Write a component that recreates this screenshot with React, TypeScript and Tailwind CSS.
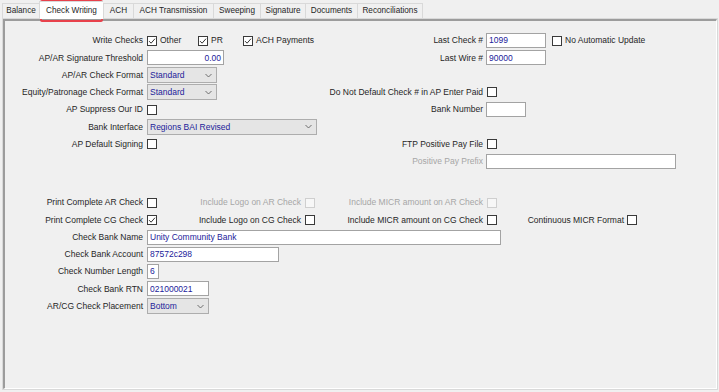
import React from 'react'

const NAVY = 'text-[#22229a]'

const Box = ({ checked, disabled }: { checked?: boolean; disabled?: boolean }) => (
  <span
    className={`w-[10px] h-[10px] shrink-0 border flex items-center justify-center ${
      disabled ? 'border-[#cfcfcf] bg-[#f7f7f7]' : 'border-[#3a3a3a] bg-white'
    }`}
  >
    {checked && (
      <svg width="8" height="8" viewBox="0 0 8 8">
        <path d="M1 4.1 L3.1 6.2 L7 1.7" fill="none" stroke="#333" strokeWidth="1" />
      </svg>
    )}
  </span>
)

const Label = ({ w, children, dim }: { w: string; children?: React.ReactNode; dim?: boolean }) => (
  <div className={`${w} shrink-0 flex justify-end whitespace-nowrap ${dim ? 'text-[#a6a6a6]' : 'text-[#262626]'}`}>
    {children}
  </div>
)

const Field = ({ w, value, right }: { w: string; value?: string; right?: boolean }) => (
  <div
    className={`${w} h-[15px] shrink-0 bg-white border border-[#a3a3a3] flex items-center px-[2px] ${NAVY} ${
      right ? 'justify-end' : ''
    }`}
  >
    {value}
  </div>
)

const Chevron = () => (
  <svg width="7" height="5" viewBox="0 0 7 5">
    <path d="M0.5 1 L3.5 4 L6.5 1" fill="none" stroke="#606060" strokeWidth="0.9" />
  </svg>
)

const Select = ({ w, value }: { w: string; value: string }) => (
  <div
    className={`${w} h-[16px] shrink-0 bg-[#e5e5e5] border border-[#adadad] flex items-center justify-between pl-[2px] pr-[4px] ${NAVY}`}
  >
    <span>{value}</span>
    <Chevron />
  </div>
)

const Check = ({ label, checked }: { label: string; checked?: boolean }) => (
  <div className="flex items-center text-[#262626]">
    <Box checked={checked} />
    <span className="ml-[3px]">{label}</span>
  </div>
)

// one row of the top block: left label, left controls, right label, right controls
const Row = ({
  label,
  left,
  rlabel,
  right,
  rdim,
}: {
  label?: string
  left?: React.ReactNode
  rlabel?: string
  right?: React.ReactNode
  rdim?: boolean
}) => (
  <div className="flex items-center h-[17.25px]">
    <Label w="w-[138px]">{label}</Label>
    <div className="w-[184px] shrink-0 flex items-center pl-[4px]">{left}</div>
    <Label w="w-[156px]" dim={rdim}>
      {rlabel}
    </Label>
    <div className="flex items-center">{right}</div>
  </div>
)

const tabs = [
  { name: 'Balance', w: 'w-[37px]' },
  { name: 'Check Writing', w: 'w-[64px]', active: true },
  { name: 'ACH', w: 'w-[30px]' },
  { name: 'ACH Transmission', w: 'w-[80px]' },
  { name: 'Sweeping', w: 'w-[47px]' },
  { name: 'Signature', w: 'w-[45px]' },
  { name: 'Documents', w: 'w-[52px]' },
  { name: 'Reconciliations', w: 'w-[66px]' },
]

export default function App() {
  return (
    <div className="relative w-[719px] h-[392px] bg-[#f0f0f0] flex flex-col overflow-hidden font-['Liberation_Sans',Arial,sans-serif] text-[8.5px] leading-none text-black">
      {/* Tabs */}
      <div className="flex items-end h-[18px] pl-[2px] text-[8.2px] text-[#262626]">
        {tabs.map((t, i) => (
          <div
            key={t.name}
            className={`${t.w} flex items-center justify-center pt-px border-t border-l border-[#d9d9d9] ${
              i === tabs.length - 1 ? 'border-r' : ''
            } ${t.active ? 'h-[18px] -mb-px bg-white relative z-10' : 'h-[15px] bg-[#f0f0f0]'}`}
          >
            {t.name}
          </div>
        ))}
      </div>

      {/* Tab page */}
      <div className="flex-1 ml-[2px] mr-px mb-[2px] border border-[#d9d9d9] bg-[#f0f0f0]">
        <div className="h-full border-t-2 border-l-2 border-t-[#9c9c9c] border-l-[#9c9c9c] border-r border-b border-r-white border-b-white pt-[11px]">
          <Row
            label="Write Checks"
            left={
              <>
                <div className="w-[51px]">
                  <Check label="Other" checked />
                </div>
                <div className="w-[45px]">
                  <Check label="PR" checked />
                </div>
                <Check label="ACH Payments" checked />
              </>
            }
            rlabel="Last Check #"
            right={
              <>
                <Field w="w-[60px] ml-[3px]" value="1099" />
                <div className="ml-[6px]">
                  <Check label="No Automatic Update" />
                </div>
              </>
            }
          />
          <Row
            label="AP/AR Signature Threshold"
            left={<Field w="w-[77px]" value="0.00" right />}
            rlabel="Last Wire #"
            right={<Field w="w-[60px] ml-[3px]" value="90000" />}
          />
          <Row label="AP/AR Check Format" left={<Select w="w-[70px]" value="Standard" />} />
          <Row
            label="Equity/Patronage Check Format"
            left={<Select w="w-[70px]" value="Standard" />}
            rlabel="Do Not Default Check # in AP Enter Paid"
            right={
              <div className="ml-[4px]">
                <Box />
              </div>
            }
          />
          <Row
            label="AP Suppress Our ID"
            left={<Box />}
            rlabel="Bank Number"
            right={<Field w="w-[40px] ml-[3px]" />}
          />
          <Row label="Bank Interface" left={<Select w="w-[170px]" value="Regions BAI Revised" />} />
          <Row
            label="AP Default Signing"
            left={<Box />}
            rlabel="FTP Positive Pay File"
            right={
              <div className="ml-[4px]">
                <Box />
              </div>
            }
          />
          <Row rlabel="Positive Pay Prefix" rdim right={<Field w="w-[190px] ml-[3px]" />} />

          {/* Bottom block */}
          <div className="mt-[24px]">
            <div className="flex items-center h-[17.25px]">
              <Label w="w-[138px]">Print Complete AR Check</Label>
              <span className="ml-[4px]">
                <Box />
              </span>
              <Label w="w-[144px]" dim>
                Include Logo on AR Check
              </Label>
              <span className="ml-[4px]">
                <Box disabled />
              </span>
              <Label w="w-[168px]" dim>
                Include MICR amount on AR Check
              </Label>
              <span className="ml-[4px]">
                <Box disabled />
              </span>
            </div>
            <div className="flex items-center h-[17.25px]">
              <Label w="w-[138px]">Print Complete CG Check</Label>
              <span className="ml-[4px]">
                <Box checked />
              </span>
              <Label w="w-[144px]">Include Logo on CG Check</Label>
              <span className="ml-[4px]">
                <Box />
              </span>
              <Label w="w-[168px]">Include MICR amount on CG Check</Label>
              <span className="ml-[4px]">
                <Box />
              </span>
              <Label w="w-[127px]">Continuous MICR Format</Label>
              <span className="ml-[3px]">
                <Box />
              </span>
            </div>
            <Row label="Check Bank Name" left={<Field w="w-[354px]" value="Unity Community Bank" />} />
            <Row label="Check Bank Account" left={<Field w="w-[132px]" value="87572c298" />} />
            <Row label="Check Number Length" left={<Field w="w-[12px]" value="6" />} />
            <Row label="Check Bank RTN" left={<Field w="w-[62px]" value="021000021" />} />
            <Row label="AR/CG Check Placement" left={<Select w="w-[62px]" value="Bottom" />} />
          </div>
        </div>
      </div>

      {/* red highlight around the active tab */}
      <div className="absolute left-[40px] top-0 w-[63px] h-[22px] border-2 border-[#e8414b] rounded-[2px] pointer-events-none" />
    </div>
  )
}
